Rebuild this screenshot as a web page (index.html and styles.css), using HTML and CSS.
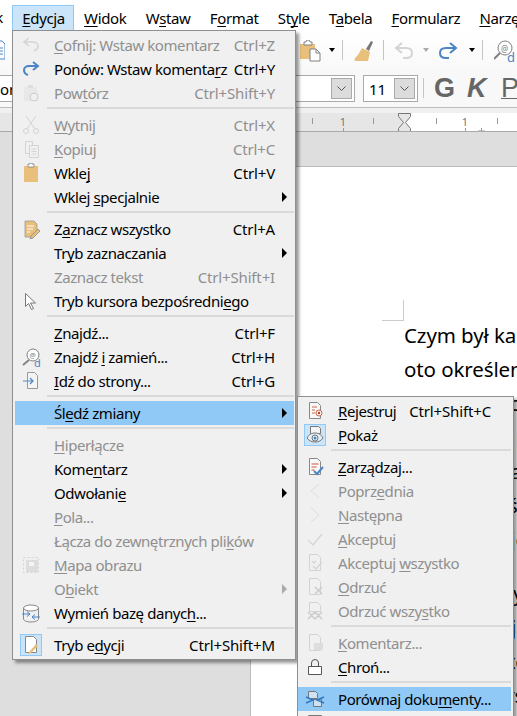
FILE: index.html
```html
<!DOCTYPE html>
<html lang="pl">
<head>
<meta charset="utf-8">
<title>Edycja</title>
<link rel="stylesheet" href="styles.css">
</head>
<body>
<div class="app">
  <nav class="menubar">
    <span class="mb-cut">k</span>
    <span class="mb-item active"><u>E</u>dycja</span>
    <span class="mb-item"><u>W</u>idok</span>
    <span class="mb-item">W<u>s</u>taw</span>
    <span class="mb-item">F<u>o</u>rmat</span>
    <span class="mb-item">St<u>y</u>le</span>
    <span class="mb-item">T<u>a</u>bela</span>
    <span class="mb-item"><u>F</u>ormularz</span>
    <span class="mb-item"><u>N</u>arzędzia</span>
  </nav>
  <div class="toolbar tb1">
    <svg class="tb-cut" width="5" height="20" viewBox="0 0 5 20"><path d="M-8 1h10l3 3v15H-8z" fill="#fff" stroke="#4a86c5"/><path d="M-4 8h7M-4 11h7M-4 14h7" stroke="#4a86c5"/></svg>
    <span class="tb-spacer"></span>
    <svg class="ic-paste" width="22" height="22" viewBox="0 0 22 22"><path d="M0 4h15v15H0z" fill="#e8c07c"/><path d="M4 4V2h2l1-2h2l1 2h2v3H4z" fill="#fff" stroke="#808080"/><path d="M10 9h6l4 4v8H10z" fill="#fff" stroke="#808080"/><path d="M16 9v4h4" fill="none" stroke="#808080"/></svg>
    <i class="drop"></i>
    <span class="tb-sep s1"></span>
    <svg class="ic-brush" width="20" height="22" viewBox="0 0 20 22"><path d="M12 9l5-8 2 1-4 9z" fill="#777"/><path d="M8 8l8 4-2 9H1c-1-2 0-3 2-5s3-5 5-8z" fill="#e8c07c"/></svg>
    <span class="tb-sep s2"></span>
    <svg class="ic-undo" width="20" height="18" viewBox="0 0 20 18"><path d="M8 1L2 6l6 5M2 6h10c4 0 6 2 6 5s-2 5-6 5H9" fill="none" stroke="#d4d4d4" stroke-width="2"/></svg>
    <i class="drop off"></i>
    <svg class="ic-redo" width="20" height="18" viewBox="0 0 20 18"><path d="M12 1l6 5-6 5M18 6H8c-4 0-6 2-6 5s2 5 6 5h3" fill="none" stroke="#4a86c5" stroke-width="2"/></svg>
    <i class="drop d3"></i>
    <span class="tb-sep s3"></span>
    <svg class="ic-find" width="22" height="22" viewBox="0 0 22 22"><circle cx="11" cy="8" r="7" fill="#fff" stroke="#808080"/><path d="M6 13l-6 6" stroke="#808080" stroke-width="2"/><text x="7" y="12" class="svg-at">@</text><text x="13" y="22" class="svg-d">d</text></svg>
  </div>
  <div class="toolbar tb2">
    <div class="combo c1"><span class="combo-text">on</span><span class="combo-btn"><svg width="9" height="5" viewBox="0 0 9 5"><path d="M.5.5l4 4 4-4" fill="none" stroke="#555"/></svg></span></div>
    <div class="combo c2"><span class="combo-text">11</span><span class="combo-btn"><svg width="9" height="5" viewBox="0 0 9 5"><path d="M.5.5l4 4 4-4" fill="none" stroke="#555"/></svg></span></div>
    <span class="tb-sep s4"></span>
    <span class="fmt g">G</span>
    <span class="fmt k">K</span>
    <span class="fmt p">P</span>
  </div>
  <div class="gap-strip"></div>
  <svg class="ruler" width="517" height="19" viewBox="0 0 517 19">
    <rect width="404" height="18" fill="#e6e6e6"/>
    <rect x="404" width="113" height="18" fill="#fff"/>
    <path d="M312.5 5v6M373.5 5v6M436.5 5v6M497.5 5v6" stroke="#999"/>
    <text x="343" y="13" class="r-num">1</text>
    <text x="465" y="13" class="r-num">1</text>
    <path d="M343.5 15v3M465.5 15v3M481.5 15v3M478 18h7" stroke="#999"/>
    <path d="M398.5.5h12v3l-5 6 5 6v3h-12v-3l5-6-5-6z" fill="#e6e6e6" stroke="#777"/>
    <path d="M0 18.5h517" stroke="#aaa"/>
  </svg>
  <main class="workspace">
    <article class="page">
      <div class="crop"></div>
      <p class="line">Czym był ka</p>
      <p class="line">oto określen</p>
      <p class="line">dzieje i historia kapitalizmu</p>
      <p class="line">od samego początku aż do końca tego</p>
      <p class="line">jak powstała jego nazwa i znaczenie</p>
      <p class="line">w dziejach świata oraz gospodarki i</p>
      <p class="line gap">wszystkich jego przemian i skutków</p>
      <p class="line">w późniejszych dziejach gospodarki i</p>
      <p class="line">w wielu krajach całego świata, które</p>
      <p class="line">znane są z tego właśnie podejścia i</p>
      <p class="line">od lat korzystają z takiego modelu l</p>
    </article>
  </main>
</div>

<div class="menu main-menu">
  <div class="row off"><span class="ico"><svg width="20" height="20" viewBox="0 0 20 20"><path d="M8 3L3 7l5 4M3 7h9c3 0 5 2 5 4s-2 4-4 5" fill="none" stroke="#d4d4d4" stroke-width="1.6"/></svg></span><span class="lbl"><u>C</u>ofnij: Wstaw komentarz</span><span class="sc">Ctrl+Z</span><span class="arr"></span></div>
  <div class="row"><span class="ico"><svg width="20" height="20" viewBox="0 0 20 20"><path d="M12 3l5 4-5 4M17 7H8C5 7 3 9 3 11s1 4 4 5" fill="none" stroke="#4a86c5" stroke-width="2"/></svg></span><span class="lbl">Ponów: Wstaw komenta<u>r</u>z</span><span class="sc">Ctrl+Y</span><span class="arr"></span></div>
  <div class="row off"><span class="ico"><svg width="20" height="20" viewBox="0 0 20 20"><path d="M3 4h13v14H3z" fill="#e8e8e8"/><path d="M7 4V2h5v3H7z" fill="#ddd"/><circle cx="13" cy="14" r="4" fill="#f0f0f0" stroke="#ccc"/></svg></span><span class="lbl">Pow<u>t</u>órz</span><span class="sc">Ctrl+Shift+Y</span><span class="arr"></span></div>
  <div class="sep"></div>
  <div class="row off"><span class="ico"><svg width="20" height="20" viewBox="0 0 20 20"><path d="M5 1l9 13M15 1L6 14" stroke="#d4d4d4" fill="none"/><circle cx="5" cy="16" r="2.5" fill="none" stroke="#d4d4d4"/><circle cx="15" cy="16" r="2.5" fill="none" stroke="#d4d4d4"/></svg></span><span class="lbl"><u>W</u>ytnij</span><span class="sc">Ctrl+X</span><span class="arr"></span></div>
  <div class="row off"><span class="ico"><svg width="20" height="20" viewBox="0 0 20 20"><path d="M4.500 2.500h7v12h-7z" fill="#f0f0f0" stroke="#d4d4d4"/><path d="M8.500 6.500h9v12h-9z" fill="#f0f0f0" stroke="#d4d4d4"/><path d="M10.500 10h5M10.500 12.500h5M10.500 15h5" stroke="#d4d4d4"/></svg></span><span class="lbl"><u>K</u>opiuj</span><span class="sc">Ctrl+C</span><span class="arr"></span></div>
  <div class="row"><span class="ico"><svg width="20" height="20" viewBox="0 0 20 20"><path d="M3 3h14v16H3z" fill="#e8c07c"/><path d="M7 3V1h2V0h2v1h2v3H7z" fill="#fff" stroke="#808080" stroke-width=".8"/></svg></span><span class="lbl">Wkle<u>j</u></span><span class="sc">Ctrl+V</span><span class="arr"></span></div>
  <div class="row"><span class="ico"></span><span class="lbl">Wklej <u>s</u>pecjalnie</span><span class="sc"></span><span class="arr on"></span></div>
  <div class="sep"></div>
  <div class="row"><span class="ico"><svg width="20" height="20" viewBox="0 0 20 20"><path d="M4 2h9l3 3v7l-5 6H4z" fill="#e8c07c" stroke="#999" stroke-width=".8"/><path d="M6 7h7M6 10h6M6 13h3" stroke="#fff"/><path d="M10 17l7-7 2 2-7 7-3 1z" fill="#e8c07c" stroke="#888" stroke-width=".8"/></svg></span><span class="lbl">Z<u>a</u>znacz wszystko</span><span class="sc">Ctrl+A</span><span class="arr"></span></div>
  <div class="row"><span class="ico"></span><span class="lbl">Tr<u>y</u>b zaznaczania</span><span class="sc"></span><span class="arr on"></span></div>
  <div class="row off"><span class="ico"></span><span class="lbl">Zaznacz tekst</span><span class="sc">Ctrl+Shift+I</span><span class="arr"></span></div>
  <div class="row"><span class="ico"><svg width="20" height="20" viewBox="0 0 20 20"><path d="M4.500 2.500v13l3-3 3 6 2-1-3-5.500h5z" fill="#fff" stroke="#777"/></svg></span><span class="lbl">Tryb kursora bezpośredni<u>e</u>go</span><span class="sc"></span><span class="arr"></span></div>
  <div class="sep"></div>
  <div class="row"><span class="ico"></span><span class="lbl"><u>Z</u>najdź...</span><span class="sc">Ctrl+F</span><span class="arr"></span></div>
  <div class="row"><span class="ico"><svg width="20" height="20" viewBox="0 0 20 20"><circle cx="12" cy="8" r="6" fill="#fff" stroke="#808080"/><path d="M8 13l-6 5" stroke="#808080" stroke-width="1.800"/><text x="8.500" y="11" class="svg-at small">@</text><text x="13" y="20" class="svg-d small">d</text></svg></span><span class="lbl">Znajdź <u>i</u> zamień...</span><span class="sc">Ctrl+H</span><span class="arr"></span></div>
  <div class="row"><span class="ico"><svg width="20" height="20" viewBox="0 0 20 20"><path d="M6.500 1.500h7l3 3v13h-10z" fill="#f4f4f4" stroke="#999"/><path d="M2 10h10M9 7l3 3-3 3" fill="none" stroke="#4a86c5" stroke-width="1.200"/></svg></span><span class="lbl"><u>I</u>dź do strony...</span><span class="sc">Ctrl+G</span><span class="arr"></span></div>
  <div class="sep"></div>
  <div class="row hl"><span class="ico"></span><span class="lbl">Śl<u>e</u>dź zmiany</span><span class="sc"></span><span class="arr on"></span></div>
  <div class="sep"></div>
  <div class="row off"><span class="ico"></span><span class="lbl"><u>H</u>iperłącze</span><span class="sc"></span><span class="arr"></span></div>
  <div class="row"><span class="ico"></span><span class="lbl">Kome<u>n</u>tarz</span><span class="sc"></span><span class="arr on"></span></div>
  <div class="row"><span class="ico"></span><span class="lbl">Odwołani<u>e</u></span><span class="sc"></span><span class="arr on"></span></div>
  <div class="row off"><span class="ico"></span><span class="lbl"><u>P</u>ola...</span><span class="sc"></span><span class="arr"></span></div>
  <div class="row off"><span class="ico"></span><span class="lbl">Łącza do zewnętrznych pli<u>k</u>ów</span><span class="sc"></span><span class="arr"></span></div>
  <div class="row off"><span class="ico"><svg width="20" height="20" viewBox="0 0 20 20"><path d="M2.500 2.500h15v15h-15z" fill="none" stroke="#d4d4d4" stroke-dasharray="2 2"/><path d="M5 5h12v12H5z" fill="#ddd"/><path d="M8 7h5v4H8z" fill="#f4f4f4"/></svg></span><span class="lbl"><u>M</u>apa obrazu</span><span class="sc"></span><span class="arr"></span></div>
  <div class="row off"><span class="ico"></span><span class="lbl">O<u>b</u>iekt</span><span class="sc"></span><span class="arr on dim"></span></div>
  <div class="row"><span class="ico"><svg width="20" height="20" viewBox="0 0 20 20"><ellipse cx="10" cy="5" rx="7.500" ry="3" fill="#fff" stroke="#888"/><path d="M2.500 5v11c0 1.500 3 3 7.500 3s7.500-1.500 7.500-3V5" fill="none" stroke="#888"/><path d="M1 11h8M6 8.500L9 11l-3 2.500M19 14h-8M14 11.500L11 14l3 2.500" fill="none" stroke="#4a86c5"/></svg></span><span class="lbl">Wymień bazę danyc<u>h</u>...</span><span class="sc"></span><span class="arr"></span></div>
  <div class="sep"></div>
  <div class="row"><span class="ico boxed"><svg width="20" height="20" viewBox="0 0 20 20"><path d="M4.500 1.500h8l3 3v13h-11z" fill="#fff" stroke="#888"/><path d="M8 17l7-8 2 2-7 7-3 1z" fill="#e8c07c"/></svg></span><span class="lbl">Tryb e<u>d</u>ycji</span><span class="sc">Ctrl+Shift+M</span><span class="arr"></span></div>
</div>

<div class="menu sub-menu">
  <div class="row"><span class="ico"><svg width="20" height="20" viewBox="0 0 20 20"><path d="M4.500 1.500h8l3 3v13h-11z" fill="#f8f8f8" stroke="#888"/><path d="M7 6h5M7 9h3M7 12h3" stroke="#c86a4a"/><circle cx="14" cy="12" r="3" fill="#f8f8f8" stroke="#c86a4a"/><circle cx="14" cy="12" r="1.200" fill="#c0392b"/></svg></span><span class="lbl"><u>R</u>ejestruj</span><span class="sc">Ctrl+Shift+C</span></div>
  <div class="row"><span class="ico boxed"><svg width="20" height="20" viewBox="0 0 20 20"><path d="M5.500 1.500h8l2 2v5h-10z" fill="#f4f4f4" stroke="#777"/><path d="M2 13c2-4 5-5 8-5s6 1 8 5c-2 3-5 4-8 4s-6-1-8-4z" fill="#e4eef6" stroke="#777"/><circle cx="10" cy="13" r="3" fill="none" stroke="#777"/><circle cx="10" cy="13" r="1.500" fill="#4a86c5"/></svg></span><span class="lbl"><u>P</u>okaż</span><span class="sc"></span></div>
  <div class="sep"></div>
  <div class="row"><span class="ico"><svg width="20" height="20" viewBox="0 0 20 20"><path d="M4.500 1.500h8l3 3v13h-11z" fill="#f8f8f8" stroke="#888"/><path d="M6.500 7h7M6.500 10h5M6.500 13h3" stroke="#d0563c"/><path d="M9 14l3 3 6-7" fill="none" stroke="#4a86c5" stroke-width="2"/></svg></span><span class="lbl"><u>Z</u>arządzaj...</span><span class="sc"></span></div>
  <div class="row off"><span class="ico"><svg width="20" height="20" viewBox="0 0 20 20"><path d="M14 3l-8 7 8 7" fill="none" stroke="#ddd"/></svg></span><span class="lbl">Poprz<u>e</u>dnia</span><span class="sc"></span></div>
  <div class="row off"><span class="ico"><svg width="20" height="20" viewBox="0 0 20 20"><path d="M6 3l8 7-8 7" fill="none" stroke="#ddd"/></svg></span><span class="lbl"><u>N</u>astępna</span><span class="sc"></span></div>
  <div class="row off"><span class="ico"><svg width="20" height="20" viewBox="0 0 20 20"><path d="M3 11l5 5 9-11" fill="none" stroke="#d4d4d4" stroke-width="1.200"/></svg></span><span class="lbl"><u>A</u>kceptuj</span><span class="sc"></span></div>
  <div class="row off"><span class="ico"><svg width="20" height="20" viewBox="0 0 20 20"><path d="M4.500 1.500h8l3 3v13h-11z" fill="none" stroke="#d4d4d4"/><path d="M7 8l2 2 2-2M8 13l3 3 6-7" fill="none" stroke="#d4d4d4" stroke-width="1.200"/></svg></span><span class="lbl">Akceptuj <u>w</u>szystko</span><span class="sc"></span></div>
  <div class="row off"><span class="ico"><svg width="20" height="20" viewBox="0 0 20 20"><path d="M4.500 1.500h8l3 3v13h-11z" fill="none" stroke="#d4d4d4"/><path d="M10 10l7 7M17 10l-7 7" stroke="#ccc" stroke-width="1.500"/></svg></span><span class="lbl"><u>O</u>drzuć</span><span class="sc"></span></div>
  <div class="row off"><span class="ico"><svg width="20" height="20" viewBox="0 0 20 20"><path d="M4.500 1.500h8l3 3v6h-11z" fill="none" stroke="#d4d4d4"/><path d="M3 11l7 7M10 11l-7 7M10 11l7 7M17 11l-7 7" stroke="#ccc" stroke-width="1.500"/></svg></span><span class="lbl">Odrzuć wszy<u>s</u>tko</span><span class="sc"></span></div>
  <div class="sep"></div>
  <div class="row off"><span class="ico"><svg width="20" height="20" viewBox="0 0 20 20"><path d="M4.500 1.500h8l3 3v13h-11z" fill="none" stroke="#d4d4d4"/><path d="M9 10h9v7H9z" fill="#ddd"/></svg></span><span class="lbl"><u>K</u>omentarz...</span><span class="sc"></span></div>
  <div class="row"><span class="ico"><svg width="20" height="20" viewBox="0 0 20 20"><path d="M3.500 9.500h13v8h-13z" fill="#fff" stroke="#555"/><path d="M6.500 9.500V6a3.500 3.500 0 0 1 7 0v3.500" fill="none" stroke="#555"/></svg></span><span class="lbl"><u>C</u>hroń...</span><span class="sc"></span></div>
  <div class="sep"></div>
  <div class="row hl"><span class="ico"><svg width="20" height="20" viewBox="0 0 20 20"><path d="M3.500 2.500h7l2 2v5h-9zM8.500 10.500h8v7h-8z" fill="#cfe2f4" stroke="#777"/><path d="M1 8l7 3-7 3M19 8l-7 3 7 3" fill="none" stroke="#2f78c0" stroke-width="1.400"/></svg></span><span class="lbl">Porównaj doku<u>m</u>enty...</span><span class="sc"></span></div>
  <div class="row"><span class="ico"><svg width="20" height="20" viewBox="0 0 20 20"><path d="M3.500 2.500h13v15h-13zM10 2.500v15" fill="none" stroke="#777"/></svg></span><span class="lbl"></span><span class="sc"></span></div>
</div>
</body>
</html>
```

FILE: styles.css
```css
* { box-sizing: border-box; }
html, body { margin: 0; padding: 0; height: 100%; overflow: hidden; }
body { position: relative; width: 517px; height: 716px; background: #dedede; font-family: "Noto Sans", "Open Sans", sans-serif; color: #000; }
u { text-decoration: underline; text-decoration-thickness: 1px; text-underline-offset: 2px; text-decoration-skip-ink: none; }

.app { display: flex; flex-direction: column; height: 716px; overflow: hidden; }

.menubar { display: flex; height: 30px; background: #fff; font-size: 15px; letter-spacing: -.35px; flex: none; overflow: hidden; white-space: nowrap; }
.mb-cut { width: 12px; flex: none; display: flex; justify-content: flex-end; padding: 5px 9px 0 0; height: 30px; line-height: 25px; }
.mb-item { height: 25px; margin-top: 5px; line-height: 25px; padding: 0 7.9px 0 9.3px; flex: none; border: 1px solid transparent; border-bottom: 0; }
.mb-item.active { background: #cce4f7; border-color: #90c8f6; }

.toolbar { display: flex; align-items: center; flex: none; }
.tb1 { height: 44px; background: linear-gradient(#fff, #f8f8f8); padding-top: 0; align-items: flex-start; }
.tb1 > * { margin-top: 10px; }
.tb-cut { flex: none; }
.tb-spacer { width: 295px; flex: none; }
.drop { width: 0; height: 0; border: 3px solid transparent; border-top: 4px solid #000; border-bottom: 0; flex: none; margin: 18px 0 0 7px; }
.drop.off { border-top-color: #aaa; margin-left: 9px; }
.drop.d3 { margin-left: 11px; }
.tb-sep { width: 1px; height: 20px; background: #c4c4c4; flex: none; }
.s1 { margin-left: 7px; }
.ic-brush { margin-left: 11px; flex: none; }
.s2 { margin-left: 9px; }
.ic-paste, .ic-undo, .ic-redo, .ic-find { flex: none; }
.ic-undo { margin-left: 10px; margin-top: 12px; }
.ic-redo { margin-left: 9px; margin-top: 12px; }
.s3 { margin-left: 7px; }
.ic-find { margin-left: 11px; }
.svg-at { font: 8px "Noto Sans", sans-serif; fill: #808080; }
.svg-d { font: 13px "Noto Sans", sans-serif; fill: #4a86c5; }
.svg-at.small { font-size: 7px; }
.svg-d.small { font-size: 11px; }

.tb2 { height: 34px; background: #f8f8f8; padding: 1px 0 6px; border-bottom: 1px solid #bdbdbd; align-items: stretch; }
.combo { border: 1px solid #aaa; background: #fff; display: flex; align-items: center; justify-content: space-between; padding: 2px; flex: none; height: 27px; font-size: 15px; }
.c1 { width: 355px; border-left: 0; padding-left: 0; margin-right: 8px; }
.c2 { width: 55px; padding-left: 5px; }
.combo-btn { width: 21px; height: 21px; background: #dcdcdc; border: 1px solid #aaa; display: flex; align-items: center; justify-content: center; flex: none; }
.s4 { margin: 3px 10px 0 5px; height: 20px; }
.fmt { font: bold 27px/27px "Liberation Sans", sans-serif; color: #666; flex: none; }
.g { width: 33px; }
.k { width: 34px; font-style: italic; }
.p { text-decoration: underline; text-decoration-thickness: 1px; text-underline-offset: 1px; font-weight: 400; }

.gap-strip { height: 5px; background: #f0f0f0; flex: none; }
.ruler { display: block; flex: none; }
.r-num { font: 11px "Noto Sans", sans-serif; fill: #777; text-anchor: middle; }

.workspace { flex: 1; min-height: 0; padding: 34px 0 0 250px; background: #dedede; }
.page { background: #fff; height: 100%; border-top: 1px solid #bbb; border-left: 1px solid #bbb; padding: 133px 0 0 131px; overflow: hidden; white-space: nowrap; font-size: 20.5px; letter-spacing: -.1px; }
.crop { width: 22px; height: 21px; border-right: 1px solid #ccc; border-bottom: 1px solid #ccc; margin-bottom: -3px; }
.line { margin: 0 0 0 22px; height: 34px; line-height: 34px; }
.line.gap { margin-bottom: 20px; }

.menu { position: absolute; background: #f0f0f0; border: 1px solid #8f8f8f; box-shadow: 3px 3px 3px rgba(0,0,0,.4); font-size: 15px; letter-spacing: -.42px; white-space: nowrap; }
.main-menu { left: 12px; top: 30px; width: 284px; padding: 2px 1px 2px 2px; }
.sub-menu { left: 297px; top: 396px; width: 217px; padding: 2px 2px 0 0; }
.row { display: flex; align-items: center; height: 24px; line-height: 24px; padding-left: 6px; }
.ico { width: 20px; height: 20px; flex: none; margin-right: 13px; display: flex; align-items: center; justify-content: center; }
.lbl { flex: 1; min-width: 0; }
.sc { flex: none; letter-spacing: -.15px; }
.arr { width: 19px; flex: none; display: flex; justify-content: flex-start; padding-left: 7px; }
.arr.on::before { content: ""; border-left: 5px solid #000; border-top: 5px solid transparent; border-bottom: 5px solid transparent; }
.arr.on.dim::before { border-left-color: #aaa; }
.off { color: #8f8f8f; }
.hl { background: #90c8f6; }
.sep { height: 8px; padding-top: 2px; margin-left: 32px; }
.sep::before { content: ""; display: block; height: 2px; background: #dadada; }
.boxed { background: #cce4f7; border: 1px solid #90c8f6; width: 22px; height: 22px; margin-left: -1px; margin-right: 12px; }
.sub-menu .row { padding-left: 7px; }
.sub-menu .sc { margin-right: 20px; }
.sub-menu .sep { margin-left: 33px; }
```
